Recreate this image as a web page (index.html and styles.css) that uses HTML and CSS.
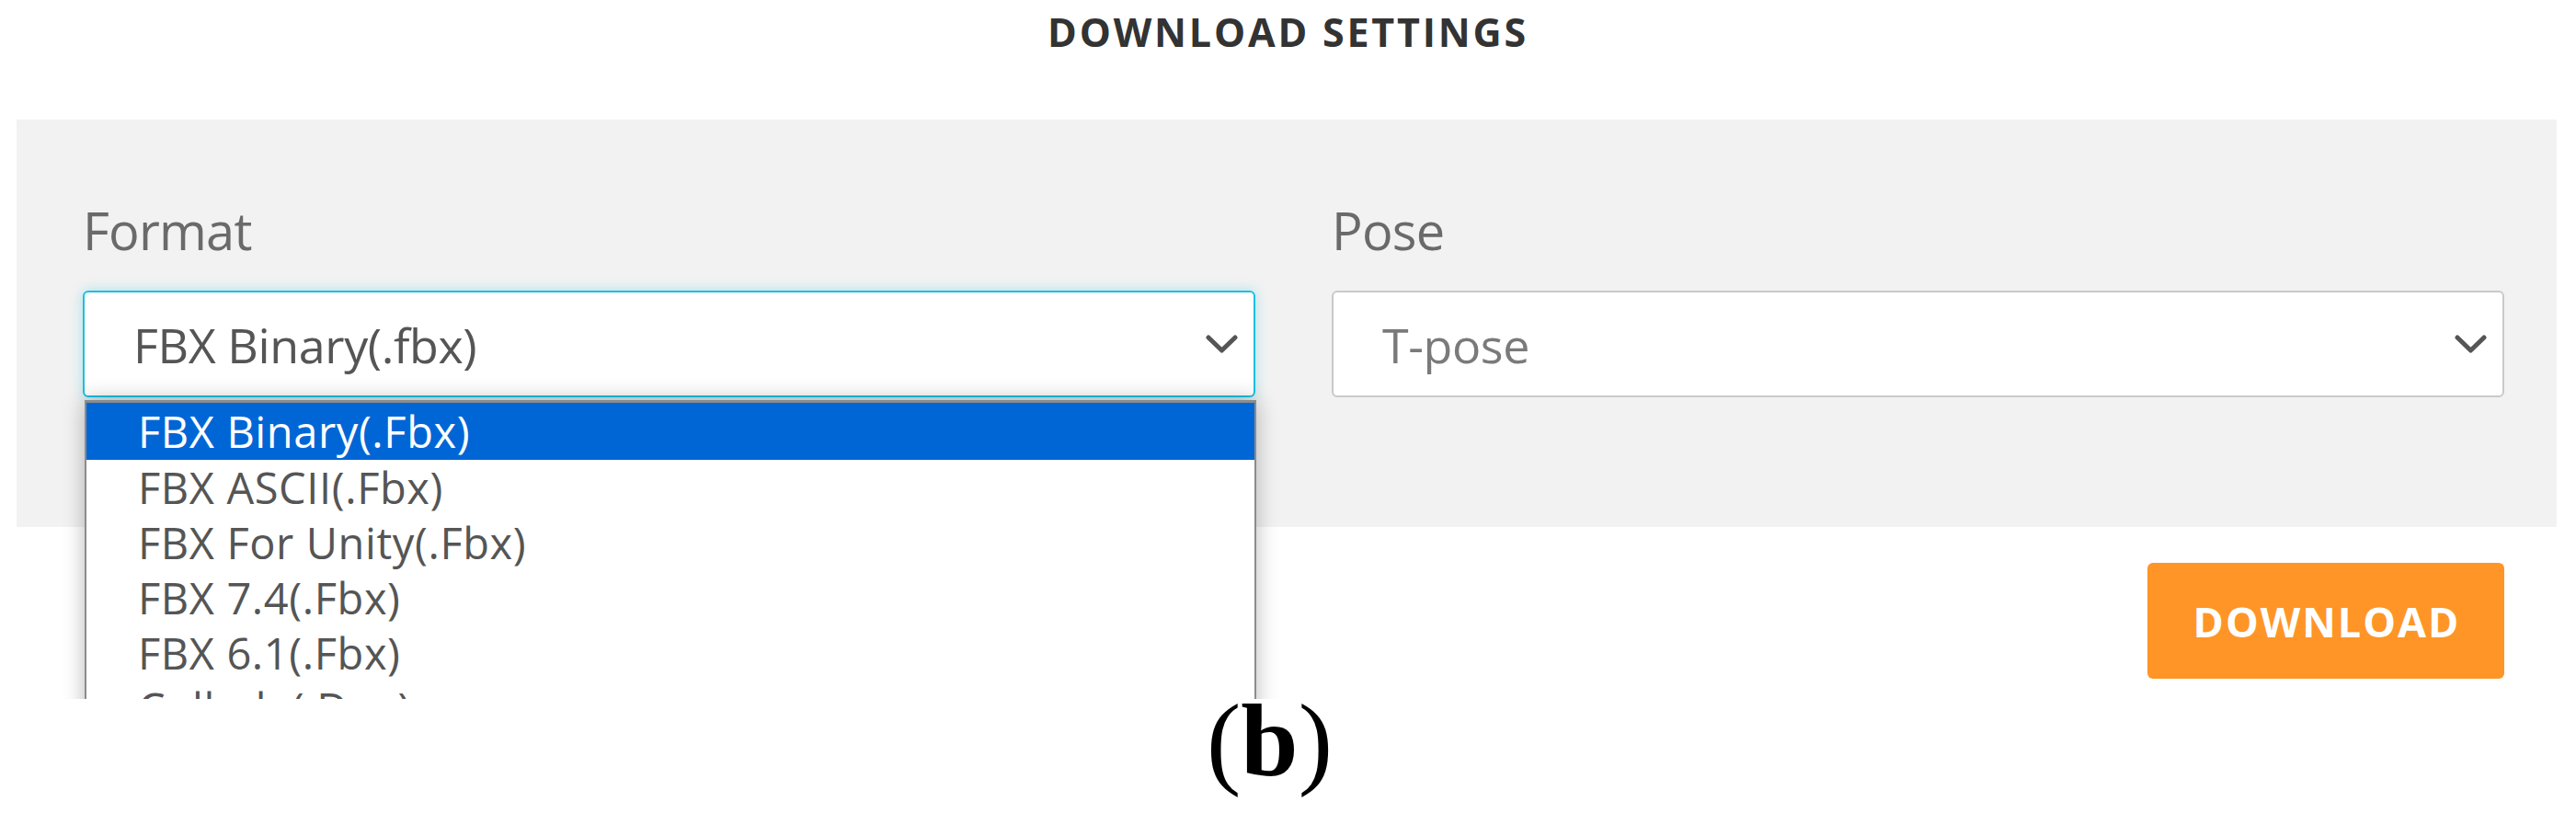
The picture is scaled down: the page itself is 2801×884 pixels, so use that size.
FILE: index.html
```html
<!DOCTYPE html>
<html lang="en">
<head>
<meta charset="utf-8">
<title>Download Settings</title>
<link rel="stylesheet" href="styles.css">
</head>
<body>
<div class="shot">
  <h1 class="title">DOWNLOAD SETTINGS</h1>
  <div class="panel">
    <div class="field">
      <div class="field-label">Format</div>
      <div class="select-wrap">
        <div class="select select-focus">
          <span class="select-value">FBX Binary(.fbx)</span>
          <svg class="chevron" width="35" height="21" viewBox="0 0 35 21"><polyline points="3,3 17.5,17 32,3" fill="none" stroke="#555" stroke-width="5" stroke-linecap="round" stroke-linejoin="round"/></svg>
        </div>
        <ul class="menu">
          <li class="menu-item menu-item-active">FBX Binary(.Fbx)</li>
          <li class="menu-item">FBX ASCII(.Fbx)</li>
          <li class="menu-item">FBX For Unity(.Fbx)</li>
          <li class="menu-item">FBX 7.4(.Fbx)</li>
          <li class="menu-item">FBX 6.1(.Fbx)</li>
          <li class="menu-item">Collada(.Dae)</li>
          <li class="menu-item">BVH(.Bvh)</li>
        </ul>
      </div>
    </div>
    <div class="field">
      <div class="field-label">Pose</div>
      <div class="select-wrap">
        <div class="select">
          <span class="select-value select-value-muted">T-pose</span>
          <svg class="chevron" width="35" height="21" viewBox="0 0 35 21"><polyline points="3,3 17.5,17 32,3" fill="none" stroke="#555" stroke-width="5" stroke-linecap="round" stroke-linejoin="round"/></svg>
        </div>
      </div>
    </div>
  </div>
  <div class="actions">
    <button class="btn">DOWNLOAD</button>
  </div>
</div>
<div class="caption">(<b>b</b>)</div>
</body>
</html>
```
FILE: styles.css
```css
html, body {
  margin: 0;
  padding: 0;
  background: #ffffff;
}

body {
  width: 2801px;
  font-family: "Open Sans", "Noto Sans", sans-serif;
}

.shot {
  height: 760px;
  overflow: hidden;
}

.title {
  margin: 0;
  height: 130px;
  box-sizing: border-box;
  padding-top: 13px;
  text-align: center;
  font-size: 43px;
  line-height: 43px;
  font-weight: 700;
  letter-spacing: 2.8px;
  color: #333333;
}

.panel {
  margin: 0 21px 0 18px;
  height: 443px;
  box-sizing: border-box;
  padding: 92px 57px 0 72px;
  background: #f2f2f2;
  display: grid;
  grid-template-columns: 1fr 1fr;
  column-gap: 83px;
  align-content: start;
}

.field-label {
  font-size: 56px;
  line-height: 56px;
  color: #6a6a6a;
  margin-bottom: 38px;
  letter-spacing: -0.8px;
}

.select-wrap {
  position: relative;
}

.select {
  height: 116px;
  box-sizing: border-box;
  border: 2px solid #c9c9c9;
  border-radius: 6px;
  background: #ffffff;
  display: flex;
  align-items: center;
  justify-content: space-between;
  padding: 0 17px 0 53px;
}

.select-focus {
  border-color: #1cc0e0;
  box-shadow: 0 0 14px rgba(28, 192, 224, 0.35);
}

.select-value {
  font-size: 52px;
  color: #555555;
  letter-spacing: -0.4px;
}

.select-value-muted {
  color: #7a7a7a;
}

.chevron {
  display: block;
}

.menu {
  position: absolute;
  top: 119px;
  left: 2px;
  right: -1px;
  margin: 0;
  padding: 0;
  list-style: none;
  background: #ffffff;
  border: 2px solid #8c8c8c;
  border-top-width: 3px;
  box-shadow: 0 0 22px rgba(0, 0, 0, 0.28);
  z-index: 2;
}

.menu-item {
  height: 60px;
  line-height: 60px;
  padding-left: 56px;
  font-size: 47px;
  color: #555555;
  letter-spacing: 0.6px;
}

.menu-item-active {
  background: #0066d6;
  color: #ffffff;
  height: 62px;
  line-height: 62px;
}

.actions {
  display: flex;
  justify-content: flex-end;
  padding: 39px 78px 0 0;
}

.btn {
  width: 388px;
  height: 126px;
  border: none;
  border-radius: 6px;
  background: #ff9526;
  color: #ffffff;
  font-family: "Open Sans", "Noto Sans", sans-serif;
  font-size: 45px;
  font-weight: 700;
  letter-spacing: 2px;
  padding: 0 0 0 2px;
}

.caption {
  height: 124px;
  line-height: 90px;
  text-align: center;
  padding-right: 40px;
  font-family: "Liberation Serif", "Times New Roman", serif;
  font-size: 112px;
  color: #000000;
}

.caption b {
  font-weight: 700;
}
```
